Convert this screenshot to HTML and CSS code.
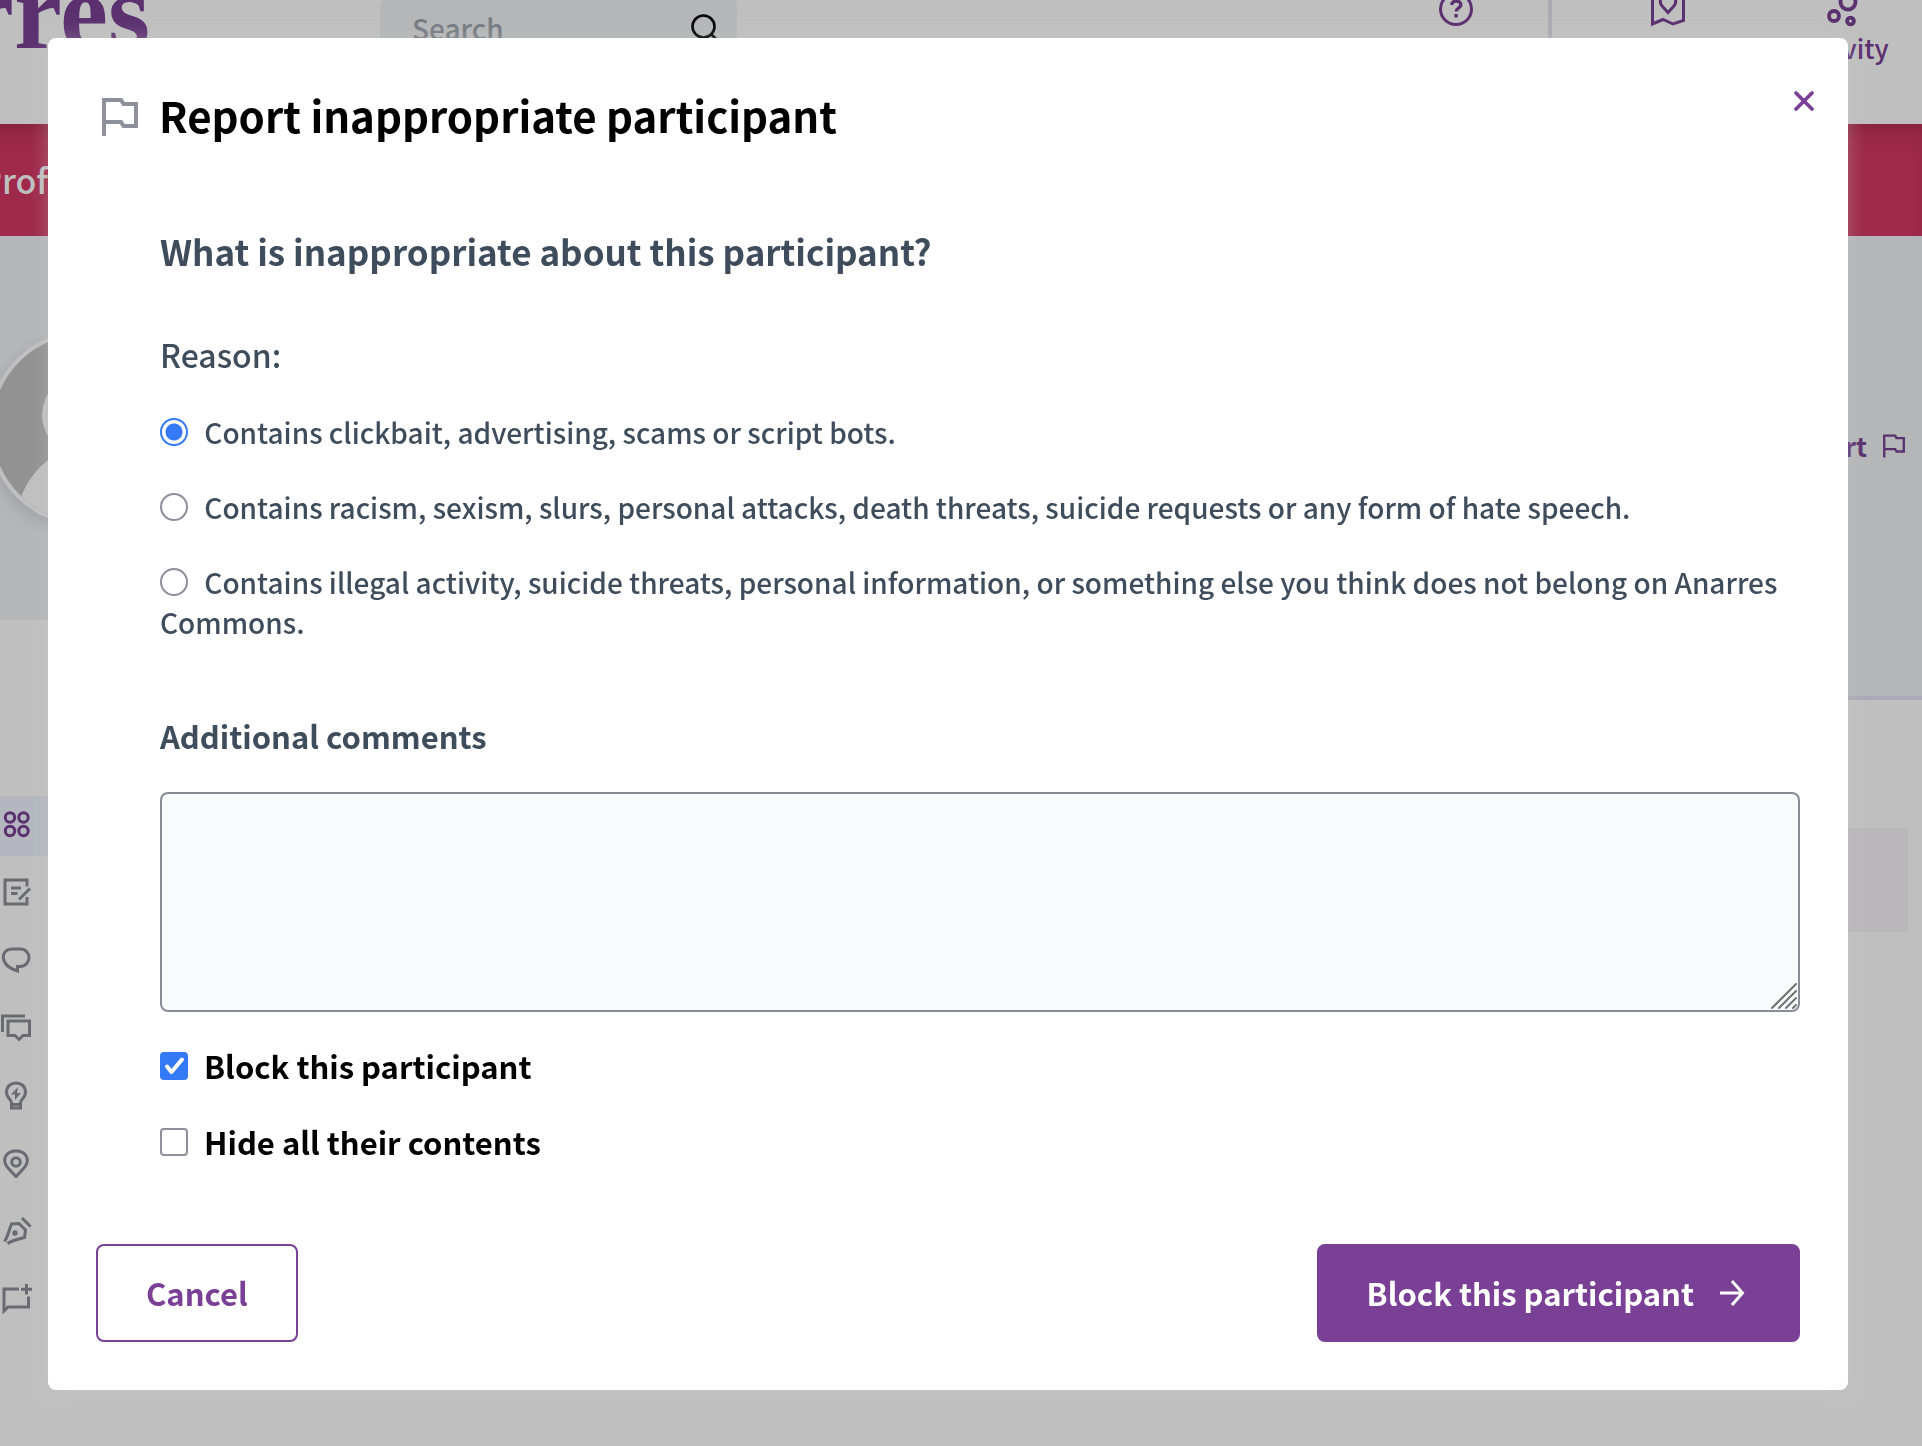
FILE: index.html
```html
<!DOCTYPE html>
<html lang="en">
<head>
<meta charset="utf-8">
<title>Report inappropriate participant</title>
<link rel="stylesheet" href="styles.css">
</head>
<body>
<div class="page">
  <header class="header">
    <a class="logo" href="#">Anarres</a>
    <div class="search">
      <input class="search-input" type="search" placeholder="Search" aria-label="Search">
      <svg class="search-icon" viewBox="0 0 28 28" aria-hidden="true"><circle cx="12.500" cy="12.500" r="11" fill="none" stroke="currentColor" stroke-width="2.600"/><path d="M20 20l7 7" stroke="currentColor" stroke-width="2.600"/></svg>
    </div>
    <nav class="top-nav">
      <a class="top-link top-link-help" href="#">
        <svg class="top-icon" viewBox="0 0 34 34" aria-hidden="true" fill="none" stroke="currentColor" stroke-width="3"><circle cx="17" cy="17" r="15.500"/><path d="M12.500 12.800c.6-2.600 2.300-3.700 4.600-3.700 2.700 0 4.700 1.500 4.700 3.900 0 3.200-4.600 3.200-4.600 6.500M17.100 22v3.500" stroke-width="3.400"/></svg>
      </a>
      <a class="top-link top-link-map" href="#">
        <svg class="top-icon" viewBox="0 0 34 34" aria-hidden="true" fill="none" stroke="currentColor" stroke-width="3"><path d="M7 4L1.500 7.500V32l10.500-4.500L22 32l10.500-3.500V4L27 6"/><path d="M17 20.500l-5.500-6c-4.500-5-1.500-12 5.500-12s10 7 5.500 12z"/></svg>
      </a>
      <a class="top-link top-link-activity" href="#">
        <svg class="top-icon" viewBox="0 0 34 34" aria-hidden="true" fill="none" stroke="currentColor" stroke-width="3.800"><circle cx="23" cy="10" r="7.500"/><circle cx="9" cy="24" r="5"/><circle cx="25.500" cy="29" r="3.400"/></svg>
        <span>Activity</span>
      </a>
    </nav>
  </header>
  <nav class="tabs"><a class="tab" href="#">Profile</a></nav>
  <main class="columns">
    <div class="column-left">
      <div class="hero-left">
        <svg class="avatar" viewBox="0 0 196 196" aria-hidden="true">
          <defs><clipPath id="face"><circle cx="98" cy="98" r="94"/></clipPath></defs>
          <circle cx="98" cy="98" r="98" fill="#fff"/>
          <g clip-path="url(#face)"><rect width="196" height="196" fill="#c3c3c3"/><ellipse cx="98" cy="85" rx="44" ry="42" fill="#fff"/><ellipse cx="98" cy="204" rx="72" ry="87" fill="#fff"/></g>
        </svg>
      </div>
      <nav class="side-nav">
        <a class="side-link side-link-active" href="#" aria-label="All"><svg class="side-icon" viewBox="0 0 28 28"><circle cx="8" cy="7.500" r="4.700"/><circle cx="21.500" cy="7.500" r="4.700"/><circle cx="8" cy="21" r="4.700"/><circle cx="21.500" cy="21" r="4.700"/></svg></a>
        <a class="side-link" href="#" aria-label="Posts"><svg class="side-icon" viewBox="0 0 28 28"><path d="M25 8.500V2H3v24h22v-7M9 10h10M9 15.500h6.500M17 21.500L28 10.500"/></svg></a>
        <a class="side-link" href="#" aria-label="Comments"><svg class="side-icon" viewBox="0 0 28 28"><path d="M10 3h8c12 0 12 17 0 17.500h-2.500v4.500C-4 18.500-1 3 10 3z"/></svg></a>
        <a class="side-link" href="#" aria-label="Debates"><svg class="side-icon" viewBox="0 0 28 28"><path d="M.5 18V2H23M6 7h21.500v14.500H21l-4 4-4-4H6z"/></svg></a>
        <a class="side-link" href="#" aria-label="Proposals"><svg class="side-icon" viewBox="0 0 28 28"><path d="M9.500 26v-5.500c0-3-5-4-5-10.500 0-12 19-12 19 0 0 6.500-5 7.500-5 10.500V26zM9.500 22.500h9"/><path d="M16 5l-7 7.500h4V18l6-7h-4z" fill="currentColor" stroke="none"/></svg></a>
        <a class="side-link" href="#" aria-label="Meetings"><svg class="side-icon" viewBox="0 0 28 28"><path d="M14 26.500l-7.500-8C-2 9 5 1 14 1s16 8 7.500 17.500z"/><circle cx="14" cy="12" r="4.300"/></svg></a>
        <a class="side-link" href="#" aria-label="Drafts"><svg class="side-icon" viewBox="0 0 28 28"><path d="M2.500 23.500C6 18 7 12 9.500 6l7.500-.5 6.500 6.500-1 7.500c-6 1.500-12 2.500-17 6M20 0l8.500 8.500"/><circle cx="13" cy="15" r="2.700" fill="currentColor" stroke="none"/></svg></a>
        <a class="side-link" href="#" aria-label="Surveys"><svg class="side-icon" viewBox="0 0 28 28"><path d="M17 3H2v22l4-4h20.500V10.500M24.500-2V8.500M19 3.200h11"/></svg></a>
      </nav>
    </div>
    <div class="column-right">
      <div class="hero-right">
        <a class="report-link" href="#"><span>Report</span>
          <svg class="report-icon" viewBox="0 0 36 38" aria-hidden="true"><path d="M2 38V2h18l2 4h12v22H22l-2-4H2" fill="none" stroke="currentColor" stroke-width="3.800"/></svg>
        </a>
      </div>
      <div class="notice"></div>
    </div>
  </main>
</div>

<div class="overlay">
  <section class="modal" role="dialog" aria-modal="true" aria-labelledby="modal-title">
    <button class="close" type="button" aria-label="Close"><svg class="close-icon" viewBox="0 0 20 20"><path d="M2 2l16 16M18 2L2 18" fill="none" stroke="currentColor" stroke-width="3.800" stroke-linecap="round"/></svg></button>
    <h2 class="title" id="modal-title">
      <svg class="title-icon" viewBox="0 -4 36 42" aria-hidden="true"><path d="M2 38V2h17l2.500 4H34v22H21.500L19 24H2" fill="none" stroke="currentColor" stroke-width="4"/></svg>
      Report inappropriate participant
    </h2>
    <form class="form">
      <div class="fields">
        <h3 class="question">What is inappropriate about this participant?</h3>
        <fieldset class="reasons">
          <legend class="reasons-title">Reason:</legend>
          <label class="reason"><input class="radio" type="radio" name="reason" checked> Contains clickbait, advertising, scams or script bots.</label>
          <label class="reason"><input class="radio" type="radio" name="reason"> Contains racism, sexism, slurs, personal attacks, death threats, suicide requests or any form of hate speech.</label>
          <label class="reason"><input class="radio" type="radio" name="reason"> Contains illegal activity, suicide threats, personal information, or something else you think does not belong on Anarres Commons.</label>
        </fieldset>
        <label class="comments-title" for="comments">Additional comments</label>
        <div class="comments-box">
          <textarea class="comments" id="comments"></textarea>
          <svg class="grip" viewBox="0 0 26 26" aria-hidden="true"><path d="M1 25L25 1M8 25L25 8M15 25l10-10M22 25l3-3" stroke="#6f7072" stroke-width="2" stroke-linecap="round"/></svg>
        </div>
        <div class="checks">
          <label class="check"><input class="checkbox" type="checkbox" checked>Block this participant</label>
          <label class="check"><input class="checkbox" type="checkbox">Hide all their contents</label>
        </div>
      </div>
      <div class="actions">
        <button class="button button-outline" type="button">Cancel</button>
        <button class="button button-solid" type="submit">Block this participant
          <svg class="arrow" viewBox="0 0 30 28" aria-hidden="true"><path d="M0 14h22M12 2l10.500 12L12 26" fill="none" stroke="currentColor" stroke-width="3"/></svg>
        </button>
      </div>
    </form>
  </section>
</div>
</body>
</html>
```
FILE: styles.css
```css
* {
  box-sizing: border-box;
}

body {
  margin: 0;
  min-height: 100vh;
  overflow: hidden;
  background: #fff;
  color: #3e4c5c;
  font-family: "Noto Sans CJK JP", "Noto Sans", sans-serif;
  font-size: 28px;
  font-weight: 500;
  line-height: 40px;
}

a {
  color: #7a4095;
  text-decoration: none;
}

svg {
  display: block;
  flex: none;
  overflow: visible;
}

/* The page is scrolled a little under the dialog */
.page {
  margin: -24px 0 0 -24px;
}

.header {
  display: flex;
  align-items: flex-start;
  height: 148px;
  padding-right: 22px;
}

.logo {
  display: flex;
  justify-content: flex-end;
  width: 174px;
  overflow: hidden;
  font-family: "Liberation Serif", serif;
  font-size: 108px;
  font-weight: 700;
  line-height: 72px;
}

.search {
  display: flex;
  align-items: center;
  width: 357px;
  height: 60px;
  margin: 22px 0 0 230px;
  padding: 0 18px 0 32px;
  border-radius: 8px;
  background: #f0f3f5;
  color: #000;
}

.search-input {
  flex: 1;
  min-width: 0;
  padding: 0;
  border: 0;
  background: none;
  font: inherit;
}

.search-input::placeholder {
  color: #9ca3ad;
}

.search-icon {
  width: 28px;
  height: 28px;
}

.top-nav {
  display: flex;
  margin-left: auto;
}

.top-link {
  display: flex;
  flex-direction: column;
  align-items: center;
  gap: 2px;
  height: 96px;
  padding-top: 16px;
  font-size: 26px;
}

.top-icon {
  width: 34px;
  height: 34px;
}

.top-link-help {
  width: 188px;
  border-right: 4px solid #e1e5ef;
}

.top-link-map {
  width: 232px;
}

.top-link-activity {
  width: 116px;
}

.tabs {
  display: flex;
  align-items: center;
  height: 112px;
  padding-left: 4px;
  background: #d33763;
  box-shadow: inset 0 20px 24px -16px rgba(0, 0, 0, 0.2);
}

.tab {
  color: #fff;
  font-size: 34px;
}

.columns {
  display: grid;
  grid-template-columns: 480px 1fr;
}

.hero-left {
  height: 384px;
  padding: 94px 0 0 12px;
  background: #f0f3f5;
}

.avatar {
  width: 196px;
  height: 196px;
  border-radius: 50%;
  box-shadow: 0 6px 16px rgba(0, 0, 0, 0.12);
}

.side-nav {
  display: flex;
  flex-direction: column;
  gap: 8px;
  margin-top: 176px;
}

.side-link {
  display: flex;
  align-items: center;
  height: 60px;
  padding: 0 0 4px 26px;
  color: #8c8f99;
}

.side-link-active {
  background: #f0f5ff;
  color: #7a4095;
}

.side-icon {
  width: 28px;
  height: 28px;
  fill: none;
  stroke: currentColor;
  stroke-width: 3;
}

.hero-right {
  display: flex;
  justify-content: flex-end;
  align-items: flex-start;
  height: 464px;
  padding: 190px 17px 0 0;
  border-bottom: 4px solid #e1e3f2;
  background: #f0f3f5;
}

.report-link {
  display: flex;
  align-items: center;
  gap: 16px;
  font-size: 26px;
  font-weight: 700;
}

.report-icon {
  width: 22px;
  height: 24px;
}

.notice {
  height: 104px;
  margin: 128px 14px 0 0;
  background: #f7f4f9;
}

.overlay {
  position: fixed;
  inset: 0;
  display: flex;
  align-items: flex-start;
  padding: 38px 74px 56px 48px;
  overflow: auto;
  background: rgba(0, 0, 0, 0.25);
}

.modal {
  position: relative;
  flex: 1;
  padding: 48px;
  border-radius: 8px;
  background: #fff;
  box-shadow: 0 0 20px rgba(203, 203, 203, 0.35);
}

.close {
  position: absolute;
  top: 43px;
  right: 24px;
  padding: 10px;
  border: 0;
  background: none;
  color: #7a4095;
}

.close-icon {
  width: 20px;
  height: 20px;
}

.title {
  display: flex;
  align-items: center;
  gap: 21px;
  margin: 0;
  padding-left: 6px;
  color: #000;
  font-size: 42px;
  font-weight: 700;
  line-height: 58px;
}

.title-icon {
  width: 36px;
  height: 42px;
  color: #8c909b;
}

.fields {
  padding-left: 64px;
}

.question {
  margin: 83px 0 55px;
  font-size: 35px;
  font-weight: 700;
  line-height: 48px;
}

.reasons {
  display: flex;
  flex-direction: column;
  gap: 35px;
  min-width: 0;
  margin: 0;
  padding: 0;
  border: 0;
}

.reasons-title {
  margin-bottom: 34px;
  padding: 0;
  font-size: 32px;
  line-height: 48px;
}

.radio,
.checkbox {
  appearance: none;
  width: 28px;
  height: 28px;
  margin: 0;
  border: 2px solid #918d9d;
  background: #fff;
}

.radio {
  margin-right: 10px;
  border-radius: 50%;
  vertical-align: -2px;
}

.radio:checked {
  border-color: #347af6;
  background: radial-gradient(circle, #347af6 8px, #fff 9px);
}

.comments-title {
  display: block;
  margin: 70px 0 32px;
  font-size: 31px;
  font-weight: 700;
  line-height: 48px;
}

.comments-box {
  position: relative;
}

.comments {
  display: block;
  width: 100%;
  height: 220px;
  padding: 16px;
  border: 2px solid #868d99;
  border-radius: 8px;
  background: #fafbfd;
  font: inherit;
  resize: none;
}

.grip {
  position: absolute;
  right: 3px;
  bottom: 3px;
  width: 26px;
  height: 26px;
}

.checks {
  display: flex;
  flex-direction: column;
  align-items: flex-start;
  gap: 28px;
  margin-top: 30px;
}

.check {
  display: flex;
  align-items: center;
  gap: 16px;
  color: #000;
  font-size: 31px;
  font-weight: 700;
  line-height: 48px;
}

.checkbox {
  border-radius: 4px;
}

.checkbox:checked {
  border: 0;
  background: #347af6 url("data:image/svg+xml,%3Csvg xmlns='http://www.w3.org/2000/svg' viewBox='0 0 28 28'%3E%3Cpath d='M7 14.500l4.500 5.500L22 7.500' fill='none' stroke='white' stroke-width='4' stroke-linecap='round' stroke-linejoin='round'/%3E%3C/svg%3E");
}

.actions {
  display: flex;
  justify-content: space-between;
  margin-top: 78px;
}

.button {
  display: flex;
  align-items: center;
  gap: 26px;
  height: 98px;
  padding: 0 48px;
  border: 2px solid #7a4095;
  border-radius: 8px;
  font: inherit;
  font-size: 31px;
  font-weight: 700;
  line-height: 48px;
}

.button-outline {
  background: #fff;
  color: #7a4095;
}

.button-solid {
  background: #7a4095;
  color: #fff;
}

.arrow {
  width: 30px;
  height: 28px;
}
```
